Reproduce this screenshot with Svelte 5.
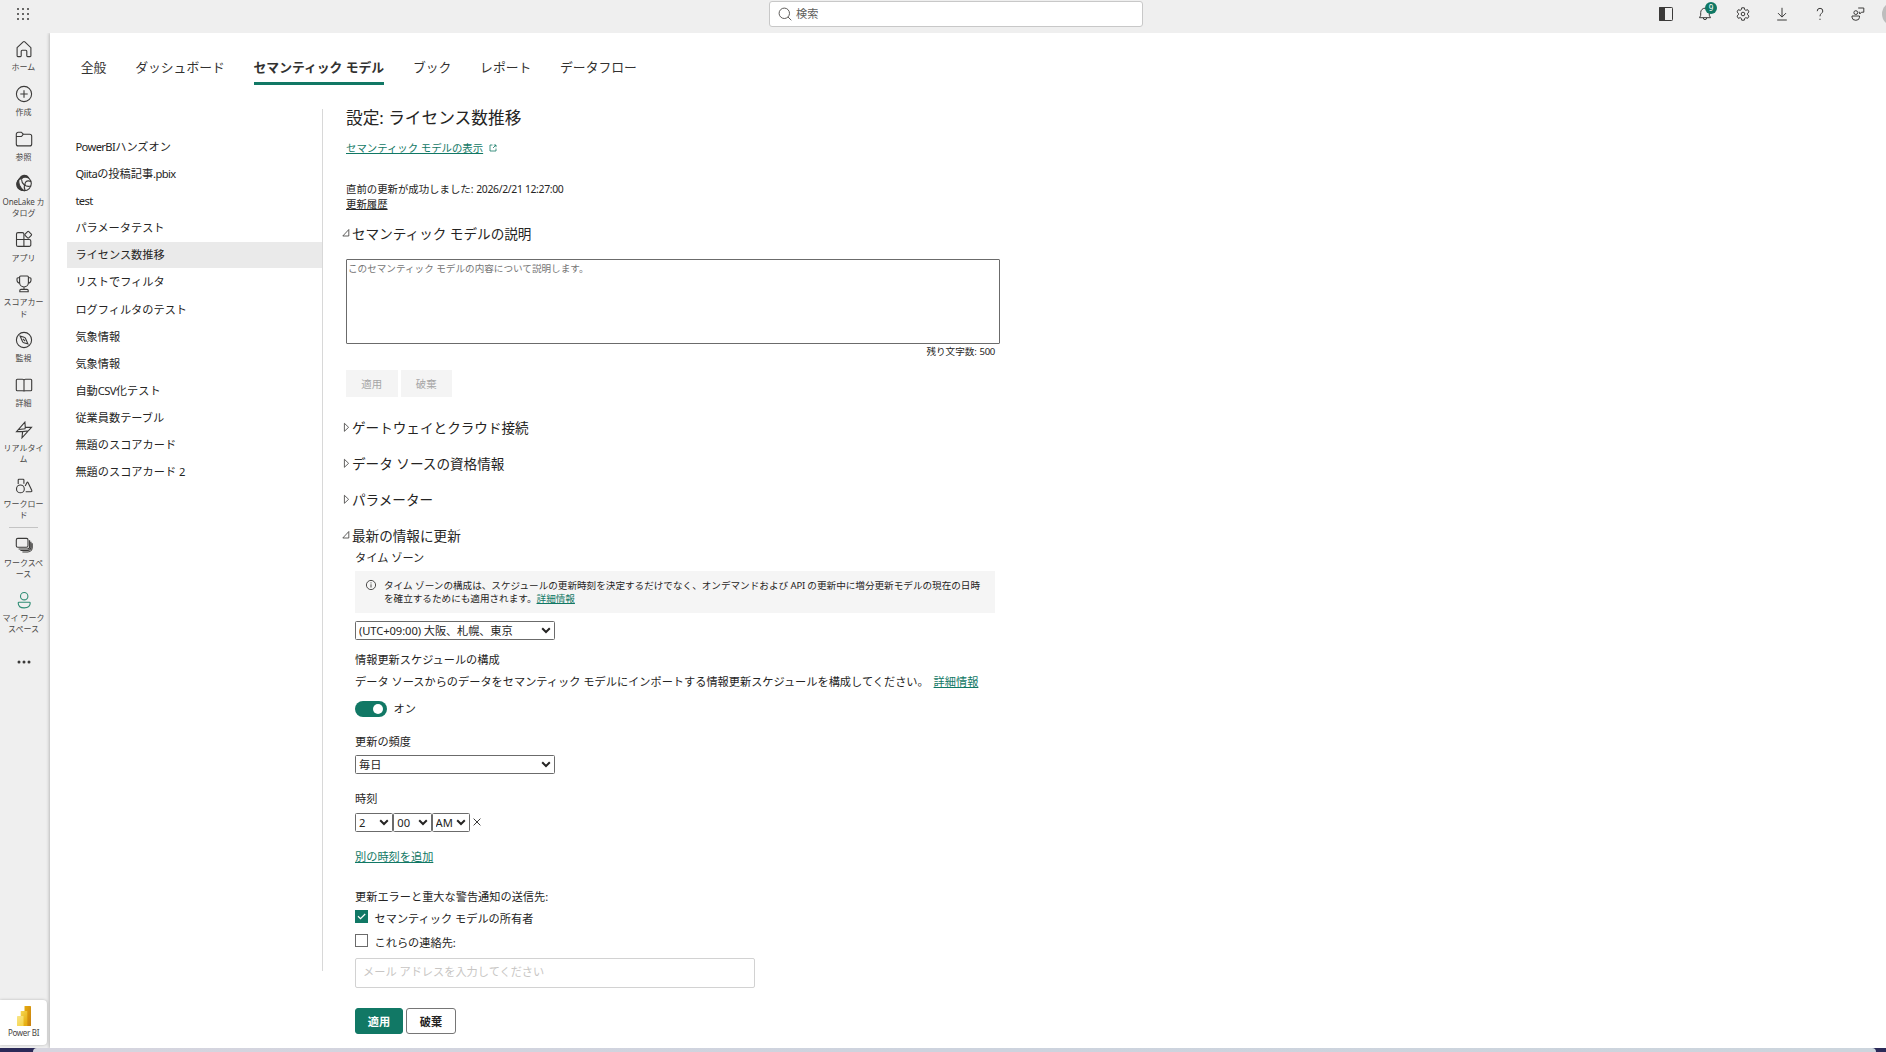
<script>
  const tabs = ['全般', 'ダッシュボード', 'セマンティック モデル', 'ブック', 'レポート', 'データフロー'];
  const activeTab = 'セマンティック モデル';

  const models = [
    'PowerBIハンズオン', 'Qiitaの投稿記事.pbix', 'test', 'パラメータテスト', 'ライセンス数推移',
    'リストでフィルタ', 'ログフィルタのテスト', '気象情報', '気象情報', '自動CSV化テスト',
    '従業員数テーブル', '無題のスコアカード', '無題のスコアカード 2'
  ];
  const selectedModel = 4;

  // Splits a label into Latin and Japanese runs so the Latin ones can be set tighter.
  const runs = (text) => text.split(/([A-Za-z.]+)/).filter(Boolean);
  const isLatin = (run) => /^[A-Za-z.]+$/.test(run);

  const navTop = [
    { icon: 'home', lines: ['ホーム'] },
    { icon: 'create', lines: ['作成'] },
    { icon: 'browse', lines: ['参照'] },
    { icon: 'onelake', lines: ['OneLake カ', 'タログ'] },
    { icon: 'apps', lines: ['アプリ'] },
    { icon: 'score', lines: ['スコアカー', 'ド'] },
    { icon: 'monitor', lines: ['監視'] },
    { icon: 'learn', lines: ['詳細'] },
    { icon: 'realtime', lines: ['リアルタイ', 'ム'] },
    { icon: 'workload', lines: ['ワークロー', 'ド'] }
  ];
  const navBottom = [
    { icon: 'spaces', lines: ['ワークスペ', 'ース'] },
    { icon: 'me', lines: ['マイ ワーク', 'スペース'] }
  ];
  const collapsed = ['ゲートウェイとクラウド接続', 'データ ソースの資格情報', 'パラメーター'];
</script>

{#snippet navItem(item)}
  <a class="nav-item">
    <svg class="nav-icon" class:green={item.icon === 'me'} viewBox="0 0 18 18">
      {#if item.icon === 'home'}
        <path d="M2.100 7.700 8.200 1.800q.8-.7 1.600 0l6.100 5.900v8.100a.8.8 0 0 1-.8.800h-2.500a.8.8 0 0 1-.8-.8v-4.500a1 1 0 0 0-1-1H7.200a1 1 0 0 0-1 1v4.500a.8.8 0 0 1-.8.800H2.900a.8.8 0 0 1-.8-.8z" />
      {:else if item.icon === 'create'}
        <circle cx="9" cy="9" r="7.600" /><path d="M9 5.300v7.400M5.300 9h7.400" />
      {:else if item.icon === 'browse'}
        <path d="M1.300 4.200a2 2 0 0 1 2-2h3l2 2h6.400a2 2 0 0 1 2 2v7.700a2 2 0 0 1-2 2H3.300a2 2 0 0 1-2-2zM1.300 6.500h4.300q.8 0 1.400-.7L8.300 4.200" />
      {:else if item.icon === 'onelake'}
        <circle cx="9.300" cy="9.600" r="7" />
        <path class="fill" d="M4.800 5.200Q5.500 1.900 9 1.400q3-.2 4.300 2-4.200-1.200-6.300 1.100zM3.900 5.700q-1.200 5.800 4.700 10.800Q3.700 16.200 2 12.200.9 8.200 3.900 5.700z" />
        <path d="M6.500 5.200q0 3.300 2.900 5.900 2.700 1.900 6.700.900M10.400 11.800Q9.400 9.700 10.600 8.200q2-2.200 5.400-.6M9.400 11.100q-.5 2.200.600 5.200" />
      {:else if item.icon === 'apps'}
        <path d="M8.900 16.400V4.100q0-1.500-1.500-1.500H3a1.500 1.500 0 0 0-1.500 1.500v10.800A1.500 1.500 0 0 0 3 16.400h11.300a1.500 1.500 0 0 0 1.500-1.500V11q0-1.500-1.500-1.500H1.500" />
        <path d="m12.600 1.600q.6-.6 1.200 0l2.500 2.500q.6.600 0 1.200l-2.500 2.500q-.6.600-1.200 0l-2.500-2.500q-.6-.6 0-1.200z" />
      {:else if item.icon === 'score'}
        <path d="M4.600 2q0-1 1-1h6.800q1 0 1 1v5.600a4.400 4.400 0 0 1-8.800 0zM4.600 2.800H3q-1 0-1 1v1.500a2.700 2.700 0 0 0 2.800 2.700M13.400 2.800H15q1 0 1 1v1.500a2.700 2.700 0 0 1-2.800 2.700M9 12v2.400M4.800 16.800v-1.200q0-1.200 1.200-1.200h6q1.200 0 1.200 1.200v1.200z" />
      {:else if item.icon === 'monitor'}
        <circle cx="9" cy="9" r="7.600" /><path d="m5.100 5.100 4.100 1.200q.8.200 1.200.9l2.500 5.700-4.100-1.200q-.8-.2-1.200-.9zM7.900 7.900l2.200 2.200" />
      {:else if item.icon === 'learn'}
        <path d="M2.300 3.200h5.200Q9 3.200 9 4.500 9 3.200 10.500 3.200h5.200q1 0 1 1v9.500q0 1-1 1h-5.200Q9 14.700 9 15.600 9 14.700 7.500 14.700H2.300q-1 0-1-1V4.200q0-1 1-1zM9 4.200v11" />
      {:else if item.icon === 'realtime'}
        <path d="M9.900 1.200 1.500 10.600h6.100l-.6 6.200 9.500-10.400h-6.200zM4 8.500l6-.8.300-1.500M7.600 10.600l6.200-.8" />
      {:else if item.icon === 'workload'}
        <circle cx="5.400" cy="11.900" r="3.900" /><path d="M3.200 7.100V3.100q0-.8.8-.8h4.100q.8 0 .8.800v3.700M10.200 8.900l1.800-3.400q.5-.9 1 0l3.600 7.500q.8 1.800-.7 1.800h-5.200" />
      {:else if item.icon === 'spaces'}
        <rect x="1.300" y="2.400" width="11.700" height="8.900" rx="1.500" />
        <path d="M14.600 4.200v6.500a2.300 2.300 0 0 1-2.300 2.300H3.600M15.900 5.700v5.400a3.400 3.400 0 0 1-3.400 3.400H5.400M17.200 7.200v4.300a4.500 4.500 0 0 1-4.500 4.500H7.400" />
      {:else if item.icon === 'me'}
        <circle cx="9.200" cy="5.200" r="3.700" /><path d="M4 11.200h10.400q.8 0 .8.900 0 4.800-6 4.800t-6-4.800q0-.9.800-.9z" />
      {/if}
    </svg>
    {#each item.lines as line}<span class:snug={item.icon === 'onelake'}>{line}</span>{/each}
  </a>
{/snippet}

{#snippet chevron()}
  <svg class="chev" viewBox="0 0 10 7"><path d="M1.200 1.300 5 5l3.800-3.700" /></svg>
{/snippet}

<div class="app">
  <header>
    <svg class="waffle" viewBox="0 0 12 12">
      {#each [1, 6, 11] as y}{#each [1, 6, 11] as x}<circle cx={x} cy={y} r="1" />{/each}{/each}
    </svg>
    <div class="search">
      <svg viewBox="0 0 14 14"><circle cx="6.300" cy="6.300" r="5.200" /><path d="m10 10 3.300 3.300" /></svg>
      <span>検索</span>
    </div>
    <div class="tools">
      <svg class="t-pane" viewBox="0 0 14 14"><rect x=".5" y=".5" width="13" height="13" rx=".8" /><path class="fill" d="M.5.5h5v13h-5z" /></svg>
      <span class="bell">
        <svg viewBox="0 0 14 14"><path d="M7 1.200a4.300 4.300 0 0 0-4.300 4.300v2.800L1.500 10.700h11l-1.200-2.400V5.500A4.300 4.300 0 0 0 7 1.200zM5.300 10.900a1.700 1.700 0 0 0 3.400 0" /></svg>
        <b>9</b>
      </span>
      <svg class="t-gear" viewBox="0 0 14 14"><circle cx="7" cy="7" r="1.800" /><path d="M5.700.8h2.600l.4 1.900 1.100.6 1.900-.6 1.300 2.200-1.400 1.300v1.600l1.400 1.300-1.300 2.200-1.900-.6-1.100.6-.4 1.900H5.700l-.4-1.900-1.100-.6-1.900.6L1 9.100l1.400-1.300V6.200L1 4.900l1.300-2.200 1.900.6 1.100-.6z" /></svg>
      <svg class="t-down" viewBox="0 0 14 14"><path d="M7 .8v9M3 6.100l4 4 4-4M2.200 13h9.600" /></svg>
      <svg class="t-help" viewBox="0 0 14 14"><path d="M4.200 4.200Q4.200 1.300 7 1.300t2.800 2.700Q9.800 5.400 8.300 6.500 7 7.500 7 9.300M7 11.700v1.300" /></svg>
      <svg class="t-feed" viewBox="0 0 14 14"><circle cx="4.800" cy="5.600" r="1.900" /><path d="M1 9h7.500v1.200Q8.500 13.300 4.800 13.300T1 10.200zM7.200 1h5.600v4.200h-2.300L8.700 7V5.200H7.700" /></svg>
      <span class="avatar"></span>
    </div>
  </header>

  <div class="body">
    <nav>
      {#each navTop as item}{@render navItem(item)}{/each}
      <hr />
      {#each navBottom as item}{@render navItem(item)}{/each}
      <svg class="more" viewBox="0 0 14 4"><circle cx="2" cy="2" r="1.500" /><circle cx="7" cy="2" r="1.500" /><circle cx="12" cy="2" r="1.500" /></svg>
      <div class="product">
        <svg viewBox="0 0 14 20">
          <defs>
            <linearGradient id="bar1" x2="1" y2="1"><stop offset="0" stop-color="#e6ad10" /><stop offset="1" stop-color="#c87e0e" /></linearGradient>
            <linearGradient id="bar2" x2=".6" y2="1"><stop offset="0" stop-color="#f6d751" /><stop offset="1" stop-color="#e6ad10" /></linearGradient>
            <linearGradient id="bar3" x2=".6" y2="1"><stop offset="0" stop-color="#f9e589" /><stop offset="1" stop-color="#f6d751" /></linearGradient>
          </defs>
          <rect x="7.500" width="6.500" height="20" rx=".6" fill="url(#bar1)" />
          <rect x="3.700" y="5" width="6.600" height="15" rx=".6" fill="url(#bar2)" />
          <rect y="10" width="6.500" height="10" rx=".6" fill="url(#bar3)" />
        </svg>
        <span>Power BI</span>
      </div>
    </nav>

    <main>
      <div class="tabs">
        {#each tabs as tab}<a class="tab" class:active={tab === activeTab}>{tab}</a>{/each}
      </div>
      <div class="columns">
        <aside>
          {#each models as model, i}
            <div class="model" class:selected={i === selectedModel}>{#each runs(model) as run}<span class:latin={isLatin(run)}>{run}</span>{/each}</div>
          {/each}
        </aside>

        <section class="settings">
          <h1>設定: ライセンス数推移</h1>
          <div class="show">
            <a class="link">セマンティック モデルの表示</a>
            <svg viewBox="0 0 8 8"><path d="M3.500 1H1v6h6V4.500M4.800 1H7v2.200M7 1 4 4" /></svg>
          </div>
          <div class="status">直前の更新が成功しました: <span class="date">2026/2/21 12:27:00</span></div>
          <div class="status"><a class="history">更新履歴</a></div>

          <h2 class="first"><svg class="tri" viewBox="0 0 8 10"><path d="M.8 8h6V1.500z" /></svg>セマンティック モデルの説明</h2>
          <textarea placeholder="このセマンティック モデルの内容について説明します。"></textarea>
          <div class="count">残り文字数: <span class="date">500</span></div>
          <div class="disabled-row"><button disabled>適用</button><button disabled>破棄</button></div>

          {#each collapsed as title}
            <h2><svg class="tri" viewBox="0 0 8 10"><path d="M2.400 1.300v8L6.600 5.300z" /></svg>{title}</h2>
          {/each}
          <h2><svg class="tri" viewBox="0 0 8 10"><path d="M.8 8h6V1.500z" /></svg>最新の情報に更新</h2>

          <div class="refresh">
            <div class="line zone">タイム ゾーン</div>
            <div class="info">
              <svg viewBox="0 0 12 12"><circle cx="6" cy="6" r="4.600" /><path d="M6 5.300v3.200M6 3.400v1" /></svg>
              <p>タイム ゾーンの構成は、スケジュールの更新時刻を決定するだけでなく、オンデマンドおよび <span class="date">API</span> の更新中に増分更新モデルの現在の日時<br />を確立するためにも適用されます。<a class="link">詳細情報</a></p>
            </div>
            <div class="select wide tz"><select><option>(UTC+09:00) 大阪、札幌、東京</option></select>{@render chevron()}</div>
            <div class="line sched">情報更新スケジュールの構成</div>
            <div class="line desc">データ ソースからのデータをセマンティック モデルにインポートする情報更新スケジュールを構成してください。 <a class="link">詳細情報</a></div>
            <div class="toggle"><i></i><span>オン</span></div>
            <div class="line freq">更新の頻度</div>
            <div class="select wide every"><select><option>毎日</option></select>{@render chevron()}</div>
            <div class="line clock">時刻</div>
            <div class="times">
              <div class="select small"><select><option>2</option></select>{@render chevron()}</div>
              <div class="select small"><select><option>00</option></select>{@render chevron()}</div>
              <div class="select small"><select><option>AM</option></select>{@render chevron()}</div>
              <svg class="remove" viewBox="0 0 8 8"><path d="m.6.6 6.800 6.800M7.400.6.600 7.400" /></svg>
            </div>
            <div class="line add"><a class="link">別の時刻を追加</a></div>
            <div class="line notify">更新エラーと重大な警告通知の送信先:</div>
            <div class="check"><span class="box on"><svg viewBox="0 0 13 13"><path d="m3 6.300 2.500 2.400L10.200 4" /></svg></span>セマンティック モデルの所有者</div>
            <div class="check second"><span class="box"></span>これらの連絡先:</div>
            <input placeholder="メール アドレスを入力してください" />
            <div class="actions"><button class="primary">適用</button><button>破棄</button></div>
          </div>
        </section>
      </div>
    </main>
  </div>
  <div class="desktop"><div class="taskbar"></div></div>
</div>

<style>
  :global(body) { margin: 0; overflow: hidden; }
  .app, .app * { box-sizing: border-box; }
  .app {
    width: 1886px; height: 1052px; display: flex; flex-direction: column; overflow: hidden;
    background: #efefef; color: #252423;
    font-family: "Noto Sans", "Noto Sans CJK JP", sans-serif; font-size: 11.2px;
  }
  svg { display: block; flex: none; fill: none; stroke: #3b3a39; }
  button, input, textarea, select { font-family: inherit; margin: 0; }
  h1, h2, p { margin: 0; font-weight: 400; }
  .latin { letter-spacing: -.055em; }
  .date { letter-spacing: -.032em; }

  header { height: 33px; flex: none; display: flex; align-items: flex-start; }
  .waffle { width: 12px; height: 12px; margin: 8px 0 0 17px; fill: #3b3a39; stroke: none; }
  .search {
    width: 374px; height: 26px; margin: 1px 0 0 740px; padding-left: 8px; display: flex; flex: none; align-items: center; gap: 4px;
    background: #fff; border: 1px solid #c8c8c8; border-radius: 3px; color: #605e5c; line-height: 24px;
  }
  .search svg { width: 14px; height: 14px; stroke: #605e5c; }
  .tools { display: flex; flex: none; align-items: center; height: 28px; margin-left: 516px; }
  .tools svg { width: 14px; height: 14px; }
  .t-pane .fill { fill: #3b3a39; }
  .bell { margin-left: 25px; position: relative; }
  .bell b {
    position: absolute; left: 7px; top: -5px; width: 12px; height: 12px; border-radius: 6px;
    background: #0f7864; color: #fff; font-size: 8px; font-weight: 400; line-height: 12px; text-align: center;
  }
  .t-gear { margin-left: 24px; }
  .t-down { margin-left: 25px; }
  .t-help { margin-left: 24px; }
  .t-feed { margin-left: 24px; }
  .avatar { width: 24px; height: 24px; margin-left: 17px; border-radius: 12px; background: #bdbdbd; flex: none; }

  .body { flex: 1; display: flex; min-height: 0; }
  nav { width: 50px; flex: none; display: flex; flex-direction: column; align-items: center; }
  .nav-item {
    width: 47px; flex: none; padding: 7.200px 0 5.200px; display: flex; flex-direction: column; align-items: center;
    font-size: 8px; line-height: 11.200px; color: #484644; white-space: nowrap;
  }
  .nav-item, .more { margin-right: 3px; }
  .nav-icon { width: 18px; height: 18px; margin-bottom: 3.200px; stroke-width: 1.100; }
  .nav-icon .fill { fill: #3b3a39; }
  .snug { letter-spacing: -.02em; }
  .green { stroke: #2f8d74; }
  hr { width: 29px; height: 1px; margin: 1.500px 3px .500px 0; border: 0; background: #c4c4c4; flex: none; }
  hr ~ .nav-item { line-height: 11px; padding-bottom: 5px; }
  .more { width: 14px; height: 4px; margin-top: 21px; fill: #3b3a39; stroke: none; }
  .product {
    width: 47px; height: 45px; margin: auto 3px 3px 0; padding-top: 6px; display: flex; flex-direction: column; align-items: center;
    background: #fff; border-radius: 0 4px 4px 0; box-shadow: 0 0 3px rgba(0, 0, 0, .25);
    font-size: 8px; line-height: 14px; color: #484644;
  }
  .product svg { width: 14px; height: 20px; stroke: none; }
  .product span { letter-spacing: -.04em; }

  main { flex: 1; background: #fff; box-shadow: -1px 0 3px rgba(0, 0, 0, .22); clip-path: inset(0 0 0 -6px); }
  .tabs { display: flex; gap: 28.800px; padding: 19px 0 0 30.800px; }
  .tab { height: 33px; font-size: 12.800px; line-height: 30px; color: #323130; white-space: nowrap; }
  .tab.active { font-weight: 700; border-bottom: 3px solid #117865; }
  .columns { display: flex; align-items: flex-start; }
  aside {
    width: 256px; height: 862px; margin: 24px 0 0 17px; padding-top: 24.700px; border-right: 1px solid #d8d8d8;
    display: flex; flex-direction: column; gap: 1.150px;
  }
  .model { height: 26px; padding-left: 8.400px; line-height: 26px; }
  .selected { background: #eaeaea; }

  .settings { width: 654px; margin-left: 23px; padding-top: 21.700px; }
  h1 { font-size: 16.700px; line-height: 22px; }
  .show { display: flex; align-items: center; gap: 5.500px; margin-top: 12.600px; font-size: 10.400px; line-height: 14px; }
  .show svg { width: 8px; height: 8px; stroke: #117865; stroke-width: .8; }
  .link { color: #117865; text-decoration: underline; }
  .status { font-size: 10.400px; line-height: 15px; }
  .show + .status { margin-top: 26.700px; }
  .history { text-decoration: underline; }
  h2 { display: flex; align-items: center; gap: 2px; margin: 16px 0 0 -4px; font-size: 13.600px; line-height: 20px; white-space: nowrap; }
  h2.first { margin-top: 12.500px; }
  .tri { width: 8px; height: 10px; margin-bottom: 2px; stroke-width: .8; }
  textarea {
    display: block; width: 654px; height: 85px; margin-top: 14.500px; padding: 2px 1px; resize: none;
    border: 1px solid #6b6b6b; border-radius: 1px; font-size: 9.600px; line-height: 14px;
  }
  textarea::placeholder { color: #757575; }
  .count { margin-top: 2px; padding-right: 5px; text-align: right; font-size: 9.600px; line-height: 12px; }
  .disabled-row { display: flex; gap: 3px; margin: 12px 0 21px; }
  .disabled-row button { width: 51.500px; height: 27px; padding: 0; border: 0; background: #f4f4f4; color: #a6a6a6; font-size: 10.400px; }

  .refresh { margin-left: 9px; }
  .line { line-height: 16px; white-space: nowrap; }
  .zone { margin-top: 3.600px; }
  .info { display: flex; width: 640px; height: 42px; margin-top: 5.400px; padding: 8px 0 0 10px; background: #f5f5f5; font-size: 9.600px; line-height: 13px; white-space: nowrap; }
  .info svg { width: 12px; height: 12px; margin-right: 7px; stroke-width: .9; }
  .select { position: relative; height: 19px; }
  .select select {
    display: block; width: 100%; height: 100%; padding: 0 0 0 3px; appearance: none; background: #fff; color: #252423;
    border: 1px solid #6b6b6b; border-radius: 1.500px; font-size: 11.200px; line-height: 17px;
  }
  .chev { position: absolute; right: 4px; top: 6px; width: 10px; height: 7px; stroke-width: 2; stroke: #252423; }
  .wide { width: 200px; }
  .tz { margin-top: 8px; }
  .tz select { letter-spacing: -.090px; }
  .sched { margin-top: 12px; }
  .desc { margin-top: 6.500px; }
  .desc .link { margin-left: 2px; }
  .toggle { display: flex; align-items: center; gap: 6.500px; height: 16px; margin-top: 10.500px; line-height: 16px; }
  .toggle i { width: 32px; height: 16px; padding: 3px 0 0 18px; border-radius: 8px; background: #117865; }
  .toggle i::before { content: ""; display: block; width: 10px; height: 10px; border-radius: 5px; background: #fff; }
  .freq { margin-top: 17.300px; }
  .every { margin-top: 4.700px; }
  .clock { margin-top: 17px; }
  .times { display: flex; align-items: center; margin-top: 6px; }
  .small { width: 38.300px; }
  .remove { width: 8px; height: 8px; margin-left: 3.500px; }
  .add { margin-top: 17px; }
  .notify { margin-top: 24px; }
  .check { display: flex; height: 17px; margin-top: 5px; line-height: 18px; }
  .check.second { margin-top: 7px; }
  .box { width: 13px; height: 13px; margin-right: 6.500px; border: 1px solid #6b6b6b; }
  .box.on { background: #117865; border-color: #117865; }
  .box svg { width: 13px; height: 13px; margin: -1px; stroke: #fff; stroke-width: 1.200; }
  input {
    display: block; width: 400px; height: 30px; margin-top: 7px; padding: 0 0 2px 7px; border: 1px solid #d2d2d2;
    border-radius: 2px; font-size: 11.200px;
  }
  input::placeholder { color: #c8c6c4; }
  .actions { display: flex; gap: 3px; margin-top: 20px; }
  .actions button { width: 50px; height: 26px; padding: 0; border: 1px solid #767676; border-radius: 3px; background: #fff; color: #252423; font-size: 11.200px; font-weight: 700; }
  .actions .primary { width: 48px; background: #117865; border-color: #117865; color: #fff; }

  .desktop { height: 4px; flex: none; background: #2b2a58; padding: 0 10px 0 33px; }
  .taskbar { height: 4px; border-radius: 4px 4px 0 0; background: linear-gradient(90deg, #d6d5df, #cdd3de 50%, #ccd5dd); }
</style>
